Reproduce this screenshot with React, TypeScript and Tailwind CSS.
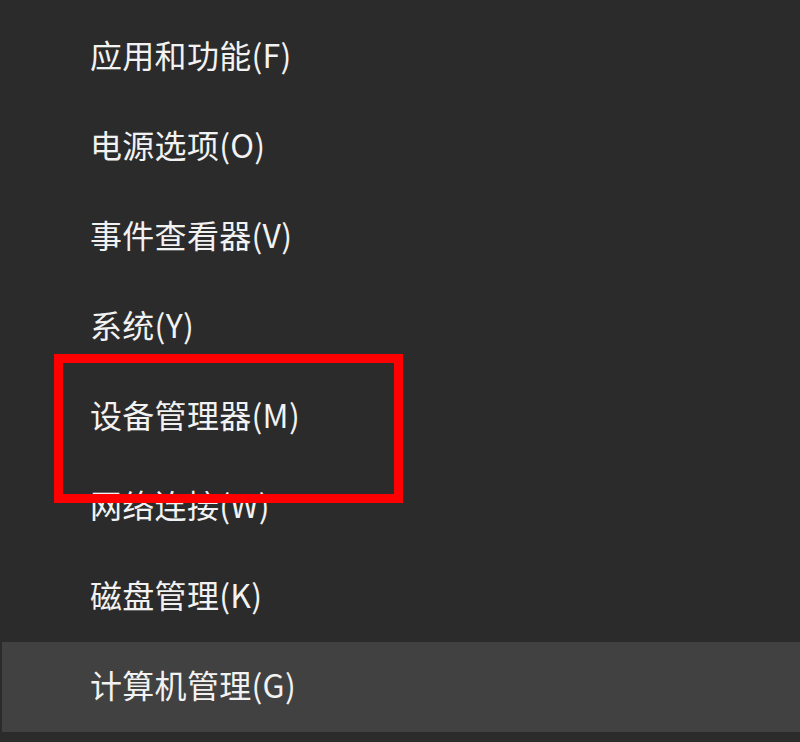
const items = [
    '应用和功能(F)',
    '电源选项(O)',
    '事件查看器(V)',
    '系统(Y)',
    '设备管理器(M)',
    '网络连接(W)',
    '磁盘管理(K)',
    '计算机管理(G)',
]

export default function App() {
    return (
        <div className="relative w-[800px] h-[742px] bg-[#2b2b2b] pt-[12px] overflow-hidden" style={{ fontFamily: '"Noto Sans CJK SC", "Noto Sans", sans-serif' }}>
            <ul className="flex flex-col">
                {items.map((label, i) => (
                    <li
                        key={label}
                        className={`h-[90px] flex items-center text-[32px] leading-none text-[#f2f2f2] ${i === items.length - 1 ? 'bg-[#414141] ml-[2px] pl-[88px]' : 'pl-[90px]'}`}
                    >
                        <span className="-mt-[6px] tracking-[0.3px]">{label}</span>
                    </li>
                ))}
            </ul>
            {/* 标注框 */}
            <div className="absolute left-[54px] top-[354px] w-[349px] h-[149px] border-[9px] border-[#ff0000] pointer-events-none"></div>
        </div>
    )
}
